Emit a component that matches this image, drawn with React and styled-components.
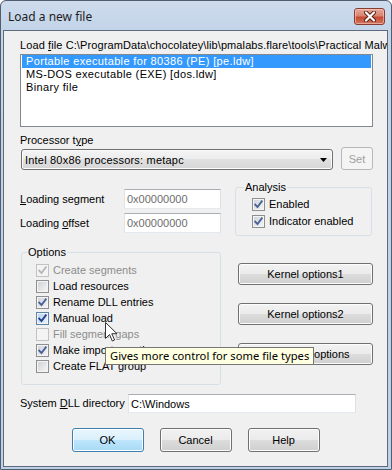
import React from 'react';
import styled, { createGlobalStyle, css } from 'styled-components';

const Global = createGlobalStyle`
  html, body { margin: 0; padding: 0; background: #ffffff; }
  body {
    font-family: "Liberation Sans", Arial, sans-serif;
    font-size: 11px;
    letter-spacing: 0;
    color: #000;
  }
  u { text-decoration: underline; text-underline-offset: 1px; }
`;

const Window = styled.div`
  position: relative;
  width: 392px;
  height: 470px;
  box-sizing: border-box;
  display: flex;
  flex-direction: column;
  background: linear-gradient(#cddbed, #c3d4e8 30px, #bdd0e6);
  border: 1px solid #4f5d6e;
  border-radius: 6px 6px 0 0;
  padding: 0 3px 2px 2px;
  overflow: hidden;
`;

const TitleBar = styled.div`
  height: 29px;
  display: flex;
  align-items: center;
  justify-content: space-between;
  padding: 1px 3px 0 5px;
  box-sizing: border-box;
`;

const Title = styled.span`
  font-family: "Noto Sans", "Open Sans", sans-serif;
  font-size: 12px;
  color: #1e1e1e;
`;

const CloseBtn = styled.div`
  width: 31px;
  height: 17px;
  box-sizing: border-box;
  border: 1px solid #8a3b2f;
  border-radius: 3px;
  background: linear-gradient(#e6a899 0%, #d9846f 45%, #c54a33 55%, #d2765d 100%);
  box-shadow: inset 0 0 0 1px rgba(255, 220, 210, 0.5);
  display: flex;
  align-items: center;
  justify-content: center;
`;

const Client = styled.div`
  flex: 1;
  border: 1px solid #5d6b7c;
  background: #f0f0f0;
  padding: 8px 14px 0 16px;
  display: flex;
  flex-direction: column;
  overflow: hidden;
`;

const Text = styled.div`
  height: 13px;
  line-height: 13px;
  white-space: nowrap;
  color: ${p => (p.$disabled ? '#8d8d8d' : '#000')};
`;

const LoadFileText = styled(Text)`
  margin-right: -14px;
  overflow: hidden;
  letter-spacing: 0.1px;
`;

const ListBox = styled.div`
  margin-top: 2px;
  height: 73px;
  box-sizing: border-box;
  border: 1px solid #828790;
  background: #fff;
  padding: 0 1px;
`;

const ListItem = styled.div`
  height: 13px;
  line-height: 13px;
  padding-left: 4px;
  white-space: nowrap;
  letter-spacing: 0.35px;
  ${p => p.$selected && css`
    background: #3399ff;
    color: #fff;
  `}
`;

const SectionLabel = styled(Text)`
  margin-top: 7px;
`;

const ProcRow = styled.div`
  display: flex;
  align-items: flex-start;
  justify-content: space-between;
`;

const Combo = styled.div`
  display: flex;
  align-items: center;
  justify-content: space-between;
  box-sizing: border-box;
  width: 312px;
  height: 21px;
  margin: 2px 0 0 1px;
  border: 1px solid #707070;
  border-radius: 3px;
  background: linear-gradient(#f4f4f4 0%, #ececec 49%, #e0e0e0 50%, #d6d6d6 100%);
  box-shadow: inset 0 0 0 1px #fbfbfb;
  padding: 0 5px 0 3px;
  letter-spacing: 0.2px;
`;

const buttonBase = css`
  box-sizing: border-box;
  display: flex;
  align-items: center;
  justify-content: center;
  border: 1px solid #707070;
  border-radius: 3px;
  background: linear-gradient(#f2f2f2 0%, #ebebeb 49%, #dddddd 50%, #cfcfcf 100%);
  box-shadow: inset 0 0 0 1px #fcfcfc;
  white-space: nowrap;
  color: #000;
`;

const SetButton = styled.div`
  ${buttonBase};
  width: 32px;
  height: 23px;
  border-color: #b5b9bc;
  background: #f4f4f4;
  box-shadow: none;
  color: #a0a0a0;
`;

const MiddleRow = styled.div`
  display: flex;
  justify-content: space-between;
  align-items: flex-start;
  margin-top: 12px;
`;

const LoadGrid = styled.div`
  display: grid;
  grid-template-columns: 104px 97px;
  row-gap: 4px;
  align-items: center;
  margin-top: 7px;
`;

const TextInput = styled.div`
  box-sizing: border-box;
  height: ${p => p.$h || 20}px;
  width: ${p => p.$w ? `${p.$w}px` : 'auto'};
  border: 1px solid;
  border-color: #abadb3 #dbdfe6 #e3e9ef #e2e3ea;
  background: #fff;
  padding: 0 2px;
  display: flex;
  align-items: center;
  white-space: nowrap;
  color: ${p => (p.$muted ? '#6d6d6d' : '#000')};
`;

const Group = styled.fieldset`
  margin: 0 ${p => p.$mr || 0}px 0 ${p => p.$ml || 0}px;
  width: ${p => p.$w}px;
  box-sizing: border-box;
  min-inline-size: 0;
  border: 1px solid #d5dfe5;
  border-radius: 3px;
  padding: ${p => p.$pad};
  display: flex;
  flex-direction: column;
`;

const Legend = styled.legend`
  margin-left: ${p => p.$ml}px;
  padding: 0 1px;
  line-height: 11px;
  height: 11px;
`;

const CheckRow = styled.div`
  display: flex;
  align-items: center;
  height: ${p => p.$h}px;
  gap: 4px;
`;

const Box = styled.div`
  width: 13px;
  height: 13px;
  box-sizing: border-box;
  border: 1px solid #8e8f8f;
  background: linear-gradient(135deg, #cdd1d7 0%, #f6f6f6 100%);
  box-shadow: inset 0 0 0 1px #f4f4f4;
  display: flex;
  align-items: center;
  justify-content: center;
  ${p => p.$hover && css`
    border-color: #5b86a8;
    background: linear-gradient(135deg, #b4d3ea 0%, #eaf4fb 100%);
  `}
  ${p => p.$disabled && css`
    border-color: #c2c2c2;
    background: #f4f4f4;
    box-shadow: none;
  `}
`;

const OptionsRow = styled.div`
  display: flex;
  justify-content: space-between;
  align-items: flex-start;
  margin-top: 11px;
`;

const ButtonColumn = styled.div`
  display: flex;
  flex-direction: column;
  gap: 18px;
  padding-top: 16px;
  width: 135px;
`;

const Button = styled.div`
  ${buttonBase};
  width: ${p => p.$w}px;
  height: ${p => p.$h}px;
  ${p => p.$default && css`
    border-color: #3c7fb1;
    background: linear-gradient(#eaf6fd 0%, #d9f0fc 49%, #bee6fd 50%, #a7d9f5 100%);
    box-shadow: inset 0 0 0 1px #ffffff;
  `}
`;

const DllRow = styled.div`
  display: flex;
  align-items: center;
  margin-top: 9px;
`;

const DllLabel = styled(Text)`
  width: 108px;
`;

const FooterRow = styled.div`
  display: flex;
  justify-content: center;
  gap: 16px;
  margin: 15px 0 0 -2px;
`;

const Tooltip = styled.div`
  position: absolute;
  left: 104px;
  top: 346px;
  height: 18px;
  box-sizing: border-box;
  padding: 0 4px 0 4px;
  border: 1px solid #767676;
  background: #ffffe1;
  font-family: "Noto Sans", "Open Sans", sans-serif;
  font-size: 11.2px;
  line-height: 16px;
  white-space: nowrap;
  color: #000;
`;

const Cursor = styled.svg`
  position: absolute;
  left: 104px;
  top: 321px;
`;

function Check({ color }) {
  return (
    <svg width="9" height="9" viewBox="0 0 9 9">
      <path d="M1.2 4.6 L3.5 7 L7.8 1.3" fill="none" stroke={color} strokeWidth="1.9" strokeLinecap="square" />
    </svg>
  );
}

function CheckBox({ label, checked, disabled, hover, h = 16 }) {
  const color = disabled ? '#b8b8b8' : hover ? '#213f8f' : '#4a6396';
  return (
    <CheckRow $h={h}>
      <Box $disabled={disabled} $hover={hover}>{checked && <Check color={color} />}</Box>
      <Text $disabled={disabled}>{label}</Text>
    </CheckRow>
  );
}

export default function App() {
  return (
    <>
      <Global />
      <Window>
        <TitleBar>
          <Title>Load a new file</Title>
          <CloseBtn>
            <svg width="12" height="11" viewBox="0 0 12 11">
              <path d="M2 1.5 L10 9.5 M10 1.5 L2 9.5" stroke="#5a1e16" strokeWidth="4" strokeLinecap="round" />
              <path d="M2 1.5 L10 9.5 M10 1.5 L2 9.5" stroke="#ffffff" strokeWidth="2.2" strokeLinecap="round" />
            </svg>
          </CloseBtn>
        </TitleBar>
        <Client>
          <LoadFileText>
            Load <u>f</u>ile {'C:\\ProgramData\\chocolatey\\lib\\pmalabs.flare\\tools\\Practical Malware Analysis'}
          </LoadFileText>
          <ListBox>
            <ListItem $selected>Portable executable for 80386 (PE) [pe.ldw]</ListItem>
            <ListItem>MS-DOS executable (EXE) [dos.ldw]</ListItem>
            <ListItem>Binary file</ListItem>
          </ListBox>
          <SectionLabel>Processor t<u>y</u>pe</SectionLabel>
          <ProcRow>
            <Combo>
              <span>Intel 80x86 processors: metapc</span>
              <svg width="7" height="4" viewBox="0 0 7 4"><path d="M0 0 H7 L3.5 4 Z" fill="#000" /></svg>
            </Combo>
            <SetButton>Set</SetButton>
          </ProcRow>
          <MiddleRow>
            <LoadGrid>
              <Text><u>L</u>oading segment</Text>
              <TextInput $muted>0x00000000</TextInput>
              <Text>Loading <u>o</u>ffset</Text>
              <TextInput $muted>0x00000000</TextInput>
            </LoadGrid>
            <Group $w={137} $mr={1} $pad="3px 0 5px 16px">
              <Legend $ml={-8}>Analysis</Legend>
              <CheckBox label="Enabled" checked h={17} />
              <CheckBox label="Indicator enabled" checked h={17} />
            </Group>
          </MiddleRow>
          <OptionsRow>
            <Group $w={200} $ml={1} $pad="4px 0 10px 14px">
              <Legend $ml={-9}>Options</Legend>
              <CheckBox label="Create segments" checked disabled />
              <CheckBox label="Load resources" />
              <CheckBox label="Rename DLL entries" checked />
              <CheckBox label="Manual load" checked hover />
              <CheckBox label="Fill segment gaps" disabled />
              <CheckBox label="Make imports section" checked />
              <CheckBox label="Create FLAT group" />
            </Group>
            <ButtonColumn>
              <Button $w={135} $h={22}>Kernel options1</Button>
              <Button $w={135} $h={22}>Kernel options2</Button>
              <Button $w={135} $h={22}>Processor options</Button>
            </ButtonColumn>
          </OptionsRow>
          <DllRow>
            <DllLabel>System <u>D</u>LL directory</DllLabel>
            <TextInput $w={228} $h={19}>{'C:\\Windows'}</TextInput>
          </DllRow>
          <FooterRow>
            <Button $w={72} $h={24} $default>OK</Button>
            <Button $w={72} $h={24}>Cancel</Button>
            <Button $w={72} $h={24}>Help</Button>
          </FooterRow>
        </Client>
        <Tooltip>Gives more control for some file types</Tooltip>
        <Cursor width="13" height="21" viewBox="0 0 13 21">
          <path d="M0.5 0.5 L0.5 16.5 L4.5 12.5 L7.3 19 L9.6 18 L6.8 11.7 L12 11.7 Z" fill="#ffffff" stroke="#333" strokeWidth="1" strokeLinejoin="round" />
        </Cursor>
      </Window>
    </>
  );
}
